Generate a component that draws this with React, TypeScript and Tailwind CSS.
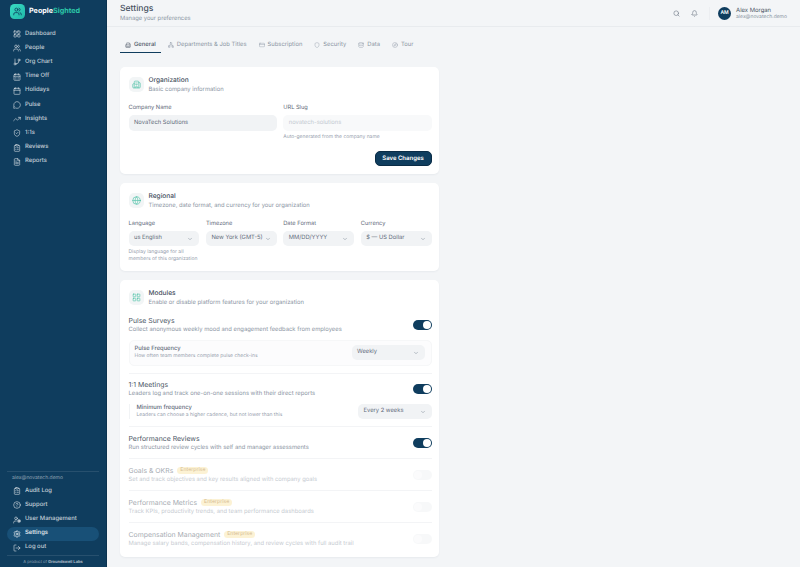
import { ReactNode } from "react"
import {
  LayoutGrid, Users, GitBranch, CalendarDays, Calendar, MessageCircle, TrendingUp, ShieldCheck,
  ClipboardList, FileText, HelpCircle, UserCog, Settings, LogOut, Search, Bell, Building2, Globe,
  ChevronDown, Network, CreditCard, Shield, Database, Compass,
} from "lucide-react"

const mainNav = [
  { icon: LayoutGrid, label: "Dashboard" },
  { icon: Users, label: "People" },
  { icon: GitBranch, label: "Org Chart" },
  { icon: CalendarDays, label: "Time Off" },
  { icon: Calendar, label: "Holidays" },
  { icon: MessageCircle, label: "Pulse" },
  { icon: TrendingUp, label: "Insights" },
  { icon: ShieldCheck, label: "1:1s" },
  { icon: ClipboardList, label: "Reviews" },
  { icon: FileText, label: "Reports" },
]

const bottomNav = [
  { icon: ClipboardList, label: "Audit Log" },
  { icon: HelpCircle, label: "Support" },
  { icon: UserCog, label: "User Management" },
  { icon: Settings, label: "Settings", active: true },
  { icon: LogOut, label: "Log out" },
]

const tabs = [
  { icon: Building2, label: "General", active: true },
  { icon: Network, label: "Departments & Job Titles" },
  { icon: CreditCard, label: "Subscription" },
  { icon: Shield, label: "Security" },
  { icon: Database, label: "Data" },
  { icon: Compass, label: "Tour" },
]

function NavItem({ icon: Icon, label, active }: { icon: typeof Users; label: string; active?: boolean }) {
  return (
    <div className={`flex h-[14.2px] items-center gap-[4.5px] rounded-[7px] pl-[5.5px] text-[5.9px] font-medium text-white/75 ${active ? "bg-[#185077] text-white/90" : ""}`}>
      <Icon className="h-[8px] w-[8px]" strokeWidth={2} />
      <span>{label}</span>
    </div>
  )
}

function Select({ value, className }: { value: ReactNode; className: string }) {
  return (
    <div className={`flex h-[15px] items-center justify-between rounded-[5px] bg-[#f1f3f5] pl-[5.5px] pr-[6px] text-[5.8px] text-[#5f6b7a] ${className}`}>
      <span className="whitespace-nowrap">{value}</span>
      <ChevronDown className="h-[6px] w-[6px] text-[#7b8694]" />
    </div>
  )
}

function CardHead({ icon: Icon, title, sub }: { icon: typeof Users; title: string; sub: string }) {
  return (
    <div className="flex items-center gap-[5px]">
      <div className="flex h-[15px] w-[15px] items-center justify-center rounded-[5px] bg-[#f2f5f6]">
        <Icon className="h-[9px] w-[9px] text-[#45bfa3]" strokeWidth={1.6} />
      </div>
      <div>
        <div className="text-[6.6px] font-medium leading-[9px] text-[#475161]">{title}</div>
        <div className="text-[5.85px] leading-[9px] text-[#8b95a3]">{sub}</div>
      </div>
    </div>
  )
}

function Toggle({ on }: { on?: boolean }) {
  return (
    <div className={`flex h-[10px] w-[18.5px] items-center rounded-full px-[1px] ${on ? "justify-end bg-[#0f3d5e]" : "bg-[#f1f3f5]"}`}>
      <div className={`h-[8px] w-[8px] rounded-full ${on ? "bg-white" : "bg-[#f8f9fa]"}`} />
    </div>
  )
}

function Module({ title, sub, on, badge, className }: { title: string; sub: string; on?: boolean; badge?: boolean; className?: string }) {
  return (
    <div className={`flex items-center justify-between ${badge ? "opacity-50" : ""} ${className ?? ""}`}>
      <div>
        <div className="flex items-center gap-[4px] text-[6.9px] leading-[9px] text-[#4b5565]">
          {title}
          {badge && <span className="rounded-full bg-[#fbe6ab] px-[3px] text-[5.2px] leading-[7px] text-[#a8741a]">Enterprise</span>}
        </div>
        <div className="text-[5.85px] leading-[9px] text-[#8b95a3]">{sub}</div>
      </div>
      <Toggle on={on} />
    </div>
  )
}

function SubRow({ title, sub, value, selectWidth, className }: { title: string; sub: string; value: string; selectWidth: string; className: string }) {
  return (
    <div className={`flex items-center justify-between ${className}`}>
      <div>
        <div className="text-[5.8px] font-medium leading-[7.5px] text-[#5f6b7a]">{title}</div>
        <div className="text-[5px] leading-[7px] text-[#97a1ae]">{sub}</div>
      </div>
      <Select value={value} className={selectWidth} />
    </div>
  )
}

export default function App() {
  return (
    <div className="flex h-[567px] w-[800px] overflow-hidden bg-[#f3f5f7] font-['Inter',sans-serif] antialiased [text-rendering:geometricPrecision]">
      <aside className="flex w-[107px] shrink-0 flex-col border-r border-[#0b3350] bg-[#0f3d5e]">
        <div className="flex items-center gap-[4px] px-[10px] pt-[4px]">
          <div className="flex h-[15px] w-[15px] items-center justify-center rounded-[4.5px] bg-gradient-to-br from-[#3adcc4] to-[#1fb8a8]">
            <Users className="h-[9px] w-[9px] text-[#0f3d5e]" strokeWidth={2.2} />
          </div>
          <span className="text-[7.2px] font-bold text-white">
            People<span className="text-[#2cc7a8]">Sighted</span>
          </span>
        </div>
        <nav className="mt-[8px] flex flex-col px-[7px]">
          {mainNav.map((item) => (
            <NavItem key={item.label} icon={item.icon} label={item.label} />
          ))}
        </nav>
        <div className="mx-[7px] mt-auto border-t border-white/10 pt-[2px]">
          <div className="px-[5px] pb-[2px] text-[5px] leading-[8px] text-white/50">alex@novatech.demo</div>
          {bottomNav.map((item) => (
            <NavItem key={item.label} icon={item.icon} label={item.label} active={item.active} />
          ))}
          <div className="border-t border-white/10 py-[2px] text-center text-[4px] leading-[7px] text-white/50">
            A product of <span className="font-semibold text-white/70">Groundswell Labs</span>
          </div>
        </div>
      </aside>

      <main className="min-w-0 flex-1">
        <header className="flex h-[27px] items-center justify-between border-b border-[#e8ebee] px-[13px] pt-[1px]">
          <div>
            <div className="text-[8.6px] font-medium leading-[11px] text-[#475161]">Settings</div>
            <div className="text-[5.8px] leading-[8px] text-[#8b95a3]">Manage your preferences</div>
          </div>
          <div className="flex items-center">
            <Search className="h-[7px] w-[7px] text-[#6b7683]" />
            <Bell className="ml-[11px] h-[7px] w-[7px] text-[#6b7683]" />
            <div className="ml-[11px] h-[13px] w-px bg-[#eceef1]" />
            <div className="ml-[8px] flex h-[13px] w-[13px] items-center justify-center rounded-full bg-[#0f3d5e] text-[5px] font-semibold text-white">AM</div>
            <div className="ml-[5px]">
              <div className="text-[5.9px] leading-[7px] text-[#4b5565]">Alex Morgan</div>
              <div className="text-[5px] leading-[7px] text-[#8b95a3]">alex@novatech.demo</div>
            </div>
          </div>
        </header>

        <div className="w-[332px] pl-[13px]">
          <div className="mt-[11px] flex h-[15px] gap-[2px] whitespace-nowrap">
            {tabs.map((tab) => (
              <div key={tab.label} className={`flex items-center gap-[3px] border-b px-[5px] text-[5.85px] ${tab.active ? "border-[#0f3d5e] font-medium text-[#4b5565]" : "border-transparent text-[#8b95a3]"}`}>
                <tab.icon className="h-[6px] w-[6px]" strokeWidth={1.6} />
                {tab.label}
              </div>
            ))}
          </div>

          <section className="mt-[14px] h-[107px] rounded-[5px] bg-white pl-[8.5px] pr-[7.5px] pt-[8.5px] shadow-[0_1px_2px_rgba(15,40,70,0.05)]">
            <CardHead icon={Building2} title="Organization" sub="Basic company information" />
            <div className="mt-[9px] grid grid-cols-2 gap-[6.5px]">
              <div>
                <div className="text-[5.7px] leading-[9px] text-[#5f6b7a]">Company Name</div>
                <div className="mt-[3.5px] flex h-[16px] items-center rounded-[5px] bg-[#f1f3f5] px-[5.5px] text-[5.8px] text-[#5f6b7a]">NovaTech Solutions</div>
              </div>
              <div>
                <div className="text-[5.7px] leading-[9px] text-[#5f6b7a]">URL Slug</div>
                <div className="mt-[3.5px] flex h-[16px] items-center rounded-[5px] bg-[#f8f9fa] px-[5.5px] text-[5.8px] text-[#c3c9d1]">novatech-solutions</div>
                <div className="mt-[2.5px] text-[5px] leading-[7px] text-[#97a1ae]">Auto-generated from the company name</div>
              </div>
            </div>
            <div className="mt-[10.5px] flex justify-end">
              <div className="flex h-[14.5px] w-[57px] items-center justify-center rounded-[5px] border border-[#0a2c46] bg-[#0f3d5e] text-[6px] font-semibold text-white">Save Changes</div>
            </div>
          </section>

          <section className="mt-[9px] h-[88px] rounded-[5px] bg-white pl-[8.5px] pr-[7.5px] pt-[8.5px] shadow-[0_1px_2px_rgba(15,40,70,0.05)]">
            <CardHead icon={Globe} title="Regional" sub="Timezone, date format, and currency for your organization" />
            <div className="mt-[9px] grid grid-cols-4 gap-[6.5px]">
              {[
                { label: "Language", value: "us English" },
                { label: "Timezone", value: "New York (GMT-5)" },
                { label: "Date Format", value: "MM/DD/YYYY" },
                { label: "Currency", value: "$ — US Dollar" },
              ].map((f) => (
                <div key={f.label}>
                  <div className="text-[5.7px] leading-[9px] text-[#5f6b7a]">{f.label}</div>
                  <Select value={f.value} className="mt-[3.5px] w-full" />
                </div>
              ))}
            </div>
            <div className="mt-[3px] w-[72px] text-[5px] leading-[6.5px] text-[#97a1ae]">Display language for all members of this organization</div>
          </section>

          <section className="mt-[9px] h-[277px] rounded-[5px] bg-white pl-[8.5px] pr-[7.5px] pt-[8.5px] shadow-[0_1px_2px_rgba(15,40,70,0.05)]">
            <CardHead icon={LayoutGrid} title="Modules" sub="Enable or disable platform features for your organization" />
            <Module className="mt-[9px]" title="Pulse Surveys" sub="Collect anonymous weekly mood and engagement feedback from employees" on />
            <div className="mt-[6px] h-[26px] rounded-[5px] border border-[#f6f7f8] bg-[#fcfcfd] pl-[5px] pr-[5.5px]">
              <SubRow className="h-full" title="Pulse Frequency" sub="How often team members complete pulse check-ins" value="Weekly" selectWidth="w-[73.5px]" />
            </div>
            <div className="mt-[7px] border-t border-[#f3f4f6] pt-[6.5px]">
              <Module title="1:1 Meetings" sub="Leaders log and track one-on-one sessions with their direct reports" on />
            </div>
            <div className="mt-[6px] border-l border-[#f1f3f5] pl-[7px]">
              <SubRow className="h-[15px]" title="Minimum frequency" sub="Leaders can choose a higher cadence, but not lower than this" value="Every 2 weeks" selectWidth="w-[73.5px]" />
            </div>
            <div className="mt-[7px] border-t border-[#f3f4f6] pt-[6.5px]">
              <Module title="Performance Reviews" sub="Run structured review cycles with self and manager assessments" on />
            </div>
            <div className="mt-[6.5px] border-t border-[#f3f4f6] pt-[7px]">
              <Module title="Goals & OKRs" sub="Set and track objectives and key results aligned with company goals" badge />
            </div>
            <div className="mt-[6px] border-t border-[#f3f4f6] pt-[7px]">
              <Module title="Performance Metrics" sub="Track KPIs, productivity trends, and team performance dashboards" badge />
            </div>
            <div className="mt-[6px] border-t border-[#f3f4f6] pt-[7px]">
              <Module title="Compensation Management" sub="Manage salary bands, compensation history, and review cycles with full audit trail" badge />
            </div>
          </section>
        </div>
      </main>
    </div>
  )
}
